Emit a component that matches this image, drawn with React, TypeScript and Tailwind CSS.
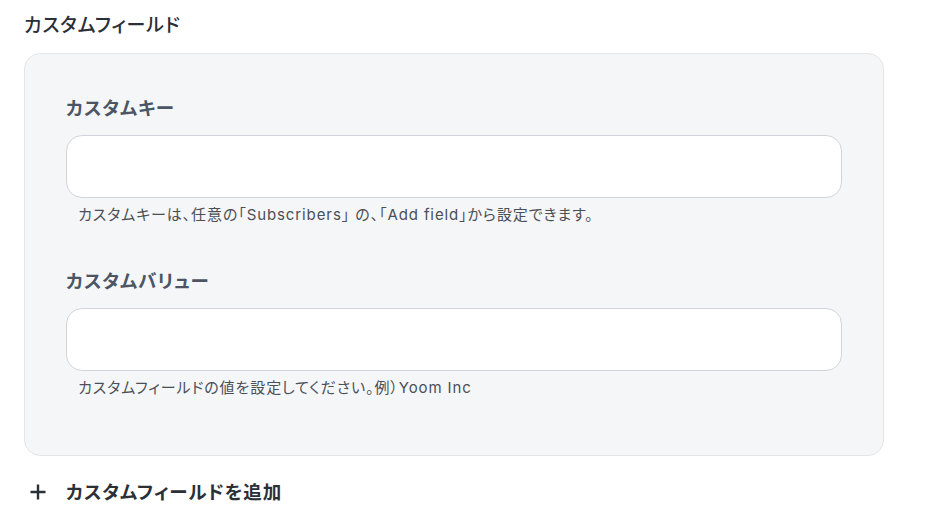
import React from 'react';

const font = { fontFamily: "Inter, 'Noto Sans CJK JP', sans-serif", fontFeatureSettings: "'palt'" };

function Field({ label, help }: { label: string; help: string }) {
  return (
    <div className="flex flex-col">
      <div className="text-[18.5px] leading-[28px] font-bold text-[#4b5563] tracking-[0.05em]">{label}</div>
      <input
        type="text"
        className="mt-[13px] h-[63px] w-full rounded-2xl border border-[#d1d5db] bg-white px-4 outline-none"
      />
      <div className="mt-[7px] ml-3 text-[15px] leading-[20px] text-[#4b4f56] tracking-[0.06em]">{help}</div>
    </div>
  );
}

export default function App() {
  return (
    <div className="min-h-screen bg-white pl-6 pt-[14px] w-[936px]" style={font}>
      <div className="text-[19px] leading-[24px] font-medium text-[#2b2f36] tracking-[0.04em]">カスタムフィールド</div>
      <div className="mt-[15px] w-[860px] rounded-2xl border border-[#e3e5e8] bg-[#f5f6f8] px-[41px] pt-[40px] pb-[57px]">
        <Field
          label="カスタムキー"
          help="カスタムキーは、任意の「Subscribers」 の、「Add field」から設定できます。"
        />
        <div className="mt-[42px]">
          <Field label="カスタムバリュー" help="カスタムフィールドの値を設定してください。例）Yoom Inc" />
        </div>
      </div>
      <button className="mt-[22px] flex items-center gap-[20px] pl-[6px] text-[18.5px] leading-[28px] font-bold text-[#2b2f36] tracking-[0.05em]">
        <svg width="16" height="16" viewBox="0 0 16 16" fill="none" stroke="currentColor" strokeWidth="2.4">
          <path d="M8 0.5v15M0.5 8h15" />
        </svg>
        カスタムフィールドを追加
      </button>
    </div>
  );
}
